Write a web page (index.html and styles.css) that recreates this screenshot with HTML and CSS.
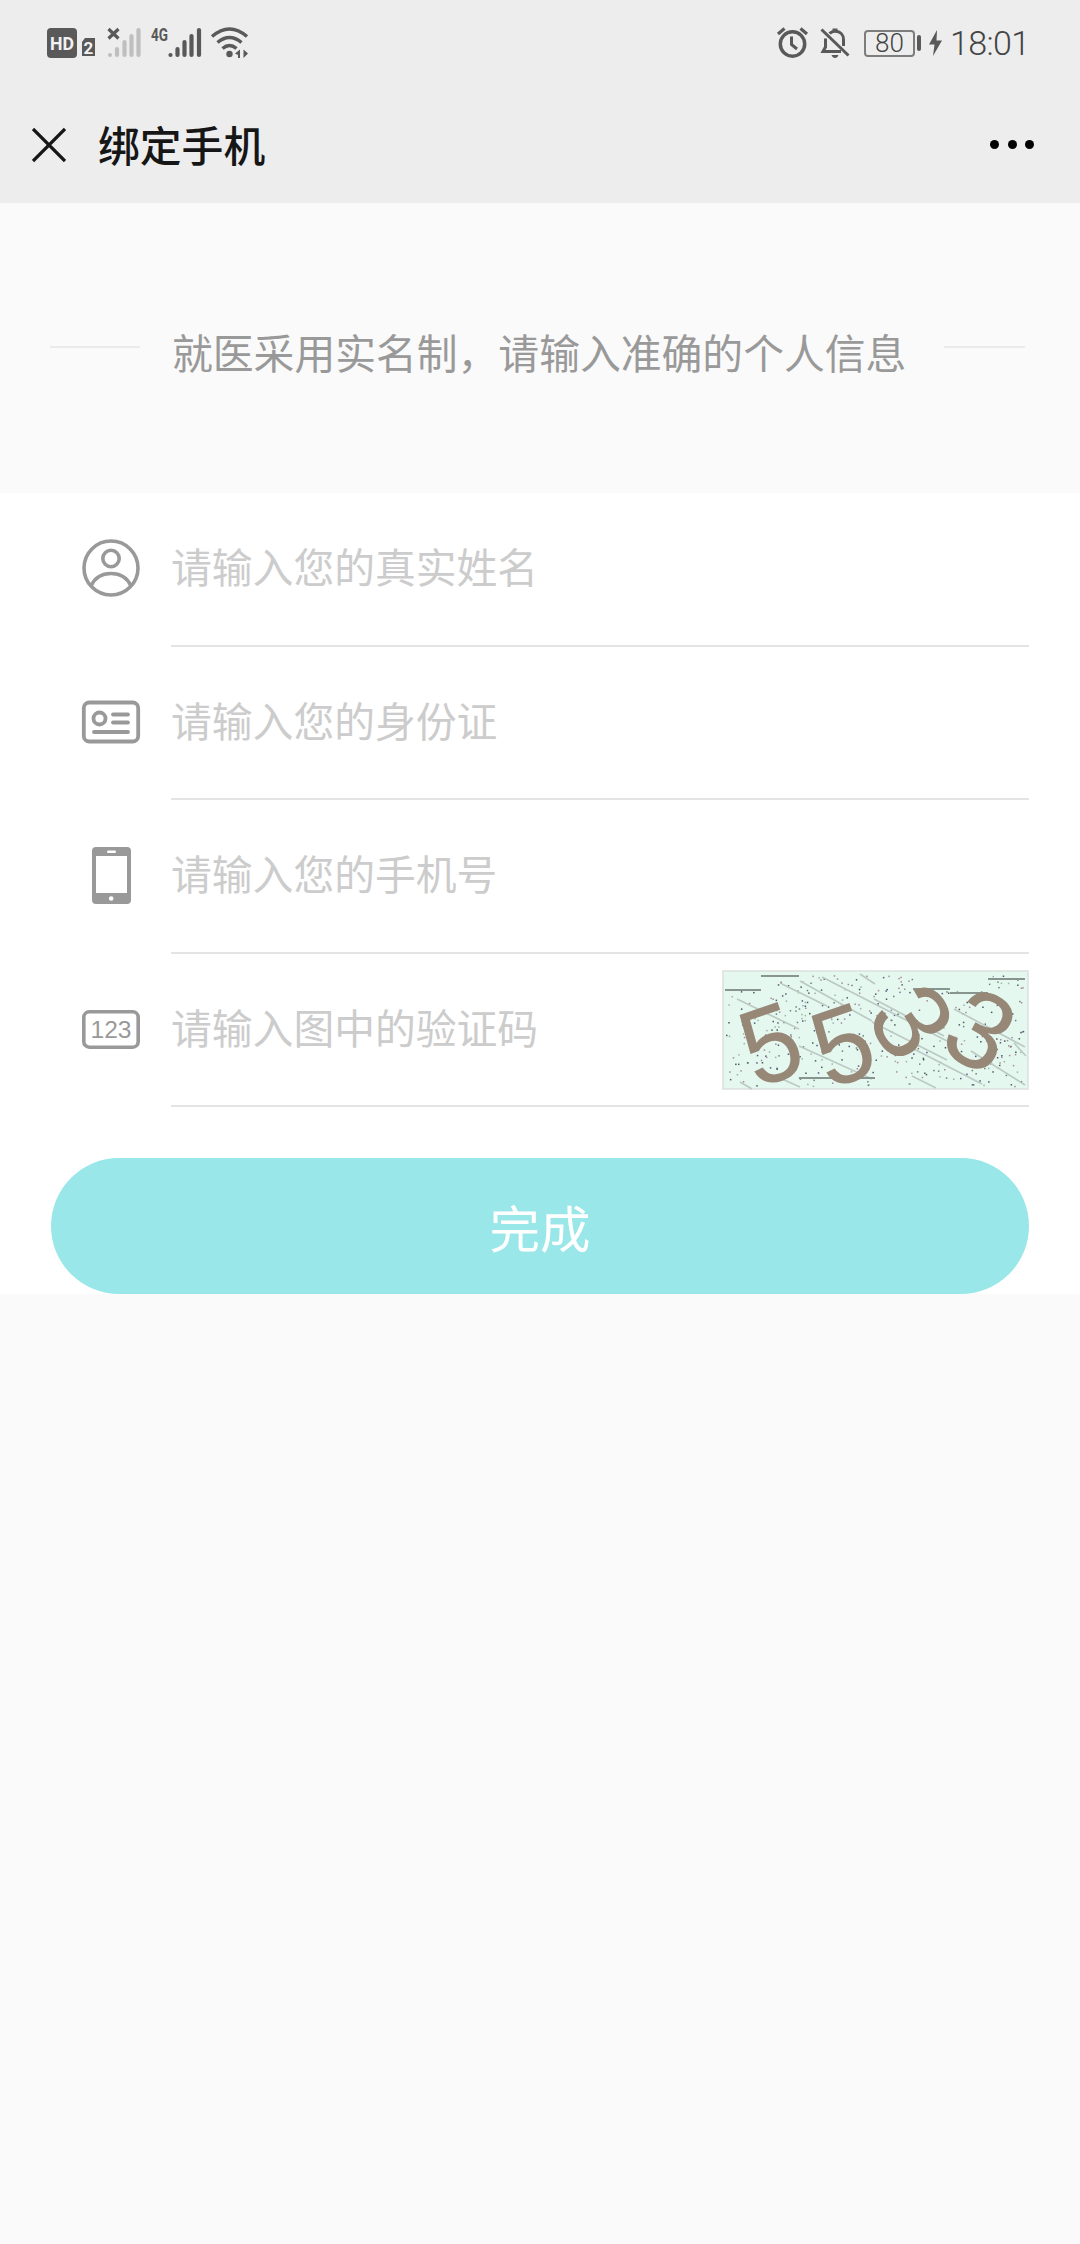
FILE: index.html
```html
<!DOCTYPE html>
<html lang="zh-CN">
<head>
<meta charset="utf-8">
<title>绑定手机</title>
<link rel="stylesheet" href="styles.css">
</head>
<body>
<header class="top">
  <div class="status">
    <div class="status-left">
      <svg class="hd" width="49" height="32" viewBox="0 0 49 32">
        <rect x="0" y="1" width="30" height="30" rx="4" fill="#595959"/>
        <text x="15" y="22.500" font-size="19" font-weight="700" fill="#f2f2f2" text-anchor="middle" textLength="24" lengthAdjust="spacingAndGlyphs">HD</text>
        <path d="M38 11h10v18h-13v-14z" fill="#595959"/>
        <text x="41.500" y="26.500" font-size="17" font-weight="700" fill="#f2f2f2" text-anchor="middle">2</text>
      </svg>
      <svg class="sig-off" width="34" height="32" viewBox="0 0 34 32">
        <g stroke="#bfbfbf" stroke-width="4.200" stroke-linecap="round"><path d="M3 28v0M10 22v6M17.500 15v13M24.500 9v19M31.500 3v25"/></g>
        <path d="M1.500 2l10 9.500M11.500 2l-10 9.500" stroke="#595959" stroke-width="3.200"/>
      </svg>
      <svg class="sig-on" width="51" height="32" viewBox="0 0 51 32">
        <text x="0" y="14" font-size="18.500" font-weight="700" fill="#595959" textLength="17" lengthAdjust="spacingAndGlyphs">4G</text>
        <g stroke="#595959" stroke-width="4.200" stroke-linecap="round"><path d="M19.500 28v0M26.500 22v6M33.500 15v13M40.500 9v19M48 3v25"/></g>
      </svg>
      <svg class="wifi" width="38" height="32" viewBox="0 0 38 32">
        <g fill="none" stroke="#595959" stroke-width="3.500"><path d="M1 9.500Q18.500-5.500 36 9.500M6.500 15.500Q18.500 5.500 30.500 15.500M11.500 21.500Q18.500 15.500 25.500 21.500"/></g>
        <circle cx="18.500" cy="27" r="3.200" fill="#595959"/>
        <path d="M24 26.500l5-4v8.500h-2v-3zM37 26.500l-4.500-4v8.500z" fill="#595959"/>
      </svg>
    </div>
    <div class="status-right">
      <svg width="31" height="32" viewBox="0 0 31 32" fill="none" stroke="#595959">
        <circle cx="15.500" cy="17" r="12.200" stroke-width="3.500"/>
        <path d="M14.500 9.500v8l5.500 4.500" stroke-width="3"/>
        <path d="M1 7l6.500-5.500M30 7l-6.500-5.500" stroke-width="3.200"/>
      </svg>
      <svg class="bell" width="30" height="32" viewBox="0 0 30 32" fill="none" stroke="#595959">
        <path d="M9.500 6.500C11 5 12.500 4.200 15 4.200C20.500 4.200 23.500 8 23.500 12.500V19M5.500 11.500V20L3 24.500H21" stroke-width="3"/>
        <path d="M15 4V1.500" stroke-width="5"/>
        <path d="M1.500 2.500L28.500 28.500" stroke-width="3"/>
        <path d="M11.500 28h7q-1 3-3.500 3t-3.500-3z" fill="#595959" stroke="none"/>
      </svg>
      <div class="battery">80</div>
      <div class="battery-tip"></div>
      <svg class="bolt" width="13" height="26" viewBox="0 0 13 26"><path d="M8 0L0 14.500h5.500L4 26l9-15.500H7.500z" fill="#595959"/></svg>
      <div class="clock">18:01</div>
    </div>
  </div>
  <nav class="nav">
    <svg class="close" width="34" height="36" viewBox="0 0 34 36"><path d="M1 2l32 32M33 2L1 34" stroke="#161616" stroke-width="3.200"/></svg>
    <h1 class="title">绑定手机</h1>
    <div class="more"><i></i><i></i><i></i></div>
  </nav>
</header>
<main>
  <div class="notice"><span class="rule rule-left"></span><p>就医采用实名制，请输入准确的个人信息</p><span class="rule rule-right"></span></div>
  <form class="form">
    <label class="row">
      <svg class="icon" width="58" height="58" viewBox="0 0 58 58" fill="none" stroke="#999" stroke-width="3.600">
        <circle cx="29" cy="29" r="27"/><circle cx="29" cy="19.500" r="8.200"/><path d="M9 47C13 38 20 34.500 29 34.500S45 38 49 47"/>
      </svg>
      <span class="field"><input type="text" placeholder="请输入您的真实姓名"></span>
    </label>
    <label class="row">
      <svg class="icon" width="58" height="58" viewBox="0 0 58 58" fill="none" stroke="#999" stroke-width="3.800">
        <rect x="1.800" y="9.500" width="54.400" height="39" rx="5.500"/><circle cx="17.500" cy="25.500" r="6"/>
        <path d="M31 21.500h15M31 29.500h15M12 39h34" stroke-linecap="round"/>
      </svg>
      <span class="field"><input type="text" placeholder="请输入您的身份证"></span>
    </label>
    <label class="row">
      <svg class="icon" width="58" height="58" viewBox="0 0 58 58">
        <rect x="10" y="1" width="39" height="57" rx="4" fill="#999"/><path d="M14 10h31v37H14z" fill="#fff"/>
        <rect x="25" y="4.500" width="9" height="2.500" rx="1.200" fill="#fff"/><circle cx="29.200" cy="52.500" r="2.300" fill="#fff"/>
      </svg>
      <span class="field"><input type="tel" placeholder="请输入您的手机号"></span>
    </label>
    <label class="row">
      <svg class="icon" width="58" height="58" viewBox="0 0 58 58">
        <rect x="1.800" y="11.800" width="54.400" height="35.400" rx="5.500" fill="none" stroke="#999" stroke-width="3.600"/>
        <text class="digits" x="29" y="38" text-anchor="middle" textLength="41" lengthAdjust="spacingAndGlyphs">123</text>
      </svg>
      <span class="field"><input type="text" placeholder="请输入图中的验证码">
        <svg class="captcha" width="307" height="120" viewBox="0 0 307 120">
          <rect x="1" y="1" width="305" height="118" fill="#e4f8f0" stroke="#dcdfde" stroke-width="1.500"/>
          <g id="noise"></g>
          <path d="M15 29L77 59M60 14L105 36M78 11L150 51M100 7L225 71M138 4L153 14M152 29L222 66M77 76L150 109M150 52L225 90M188 77L260 114M232 39L303 77M249 81L303 115M292 73L304 86M190 106L214 118M18 112L30 119M60 109L78 117" stroke="#bccac4" stroke-width="1.700"/>
          <path d="M3 20H39M39 6H77M77 108H153M191 19H228M228 23H266M266 9H303" stroke="#88948f" stroke-width="2"/>
          <g class="code" text-anchor="middle">
            <text transform="translate(48.500 73) rotate(-19) scale(.94 1)" y="38.500">5</text>
            <text transform="translate(120.500 74) rotate(-19) scale(.94 1)" y="38.500">5</text>
            <text transform="translate(191 50.500) rotate(56)" y="39">3</text>
            <text transform="translate(259 59) rotate(28)" y="39">3</text>
          </g>
        </svg>
      </span>
    </label>
    <button class="submit" type="button">完成</button>
  </form>
</main>
<script src="captcha.js"></script>
</body>
</html>
```
FILE: styles.css
```css
* { box-sizing: border-box; }
body {
  margin: 0;
  min-height: 2244px;
  background: #fafafa;
  font-family: "Noto Sans CJK SC", sans-serif;
}
.top { height: 203px; background: #ededed; }
.status {
  height: 86px;
  padding: 27px 50px 0 47px;
  display: flex;
  justify-content: space-between;
  align-items: flex-start;
  font-family: Roboto, sans-serif;
  color: #595959;
}
.status-left, .status-right { display: flex; align-items: center; height: 32px; }
.status svg { display: block; overflow: visible; }
.sig-off { margin-left: 11px; }
.sig-on { margin-left: 10px; }
.wifi { margin-left: 9px; }
.bell { margin-left: 12px; }
.battery {
  width: 51px;
  height: 27px;
  margin-left: 14px;
  border: 2px solid #7d7d7d;
  border-radius: 4px;
  font-size: 26px;
  font-weight: 300;
  line-height: 22px;
  text-align: center;
  color: #444;
}
.battery-tip { width: 4px; height: 16px; margin-left: 2px; border-radius: 2px; background: #595959; }
.bolt { margin-left: 8px; }
.clock {
  width: 80px;
  margin-left: 8px;
  font-size: 34px;
  font-weight: 300;
  line-height: 32px;
  letter-spacing: -0.6px;
  white-space: nowrap;
  color: #444;
}
.nav { height: 117px; padding: 0 46px 0 32px; display: flex; align-items: center; }
.title { margin: -2px 0 0 32px; font-size: 41.8px; line-height: 60px; font-weight: 500; color: #161616; }
.more { margin-left: auto; display: flex; gap: 8.5px; }
.more i { width: 9px; height: 9px; border-radius: 50%; background: #000; }
.notice { height: 290px; padding: 0 55px 0 50px; display: flex; align-items: flex-start; }
.notice p { margin: 119px 0 0 32px; font-size: 40.8px; line-height: 60px; color: #999; white-space: nowrap; flex: none; }
.rule { height: 2px; margin-top: 143px; background: #ebebeb; }
.rule-left { width: 90px; }
.rule-right { width: 81px; margin-left: auto; }
.form { height: 801px; padding: 0 51px; background: #fff; }
.row { display: flex; align-items: center; height: 153.5px; padding-left: 31px; }
.icon { display: block; flex: none; margin: -3px 31px 0 0; overflow: visible; }
.digits { font: 24px "Liberation Sans", sans-serif; fill: #999; }
.field {
  flex: 1;
  height: 100%;
  display: flex;
  align-items: center;
  border-bottom: 2px solid #e4e4e4;
}
.field input {
  flex: 1;
  min-width: 0;
  height: 80px;
  margin: 0 0 6px;
  padding: 0;
  border: 0;
  outline: 0;
  background: none;
  font: 400 40.8px "Noto Sans CJK SC", sans-serif;
}
.field input::placeholder { color: #ccc; }
.captcha { display: block; flex: none; margin-top: 2px; overflow: visible; }
.code { font: 109px "Liberation Sans", sans-serif; fill: #978777; }
.submit {
  display: block;
  width: 978px;
  height: 136px;
  margin-top: 51px;
  padding: 0;
  border: 0;
  border-radius: 68px;
  background: #99e7e9;
  color: #fff;
  font: 50.5px "Noto Sans CJK SC", sans-serif;
}
```
FILE: captcha.js
```javascript
// Speckles behind the verification code, from a fixed seed.
const noise = document.getElementById("noise");
let seed = 5533;
function next() {
  seed = (seed * 16807) % 2147483647;
  return seed / 2147483647;
}
const inks = ["#4c5a55", "#71807a", "#9fb2aa", "#555b78", "#a98a9c"];
for (let i = 0; i < 420; i++) {
  const x = 3 + next() * 300;
  const y = 5 + next() * 111;
  const ink = inks[Math.floor(next() * inks.length)];
  if (y < 20 && (x < 40 || (x > 190 && x < 266))) continue;
  const dot = document.createElementNS("http://www.w3.org/2000/svg", "rect");
  dot.setAttribute("x", x.toFixed(1));
  dot.setAttribute("y", y.toFixed(1));
  dot.setAttribute("width", "1.5");
  dot.setAttribute("height", "1.5");
  dot.setAttribute("fill", ink);
  noise.appendChild(dot);
}
```
